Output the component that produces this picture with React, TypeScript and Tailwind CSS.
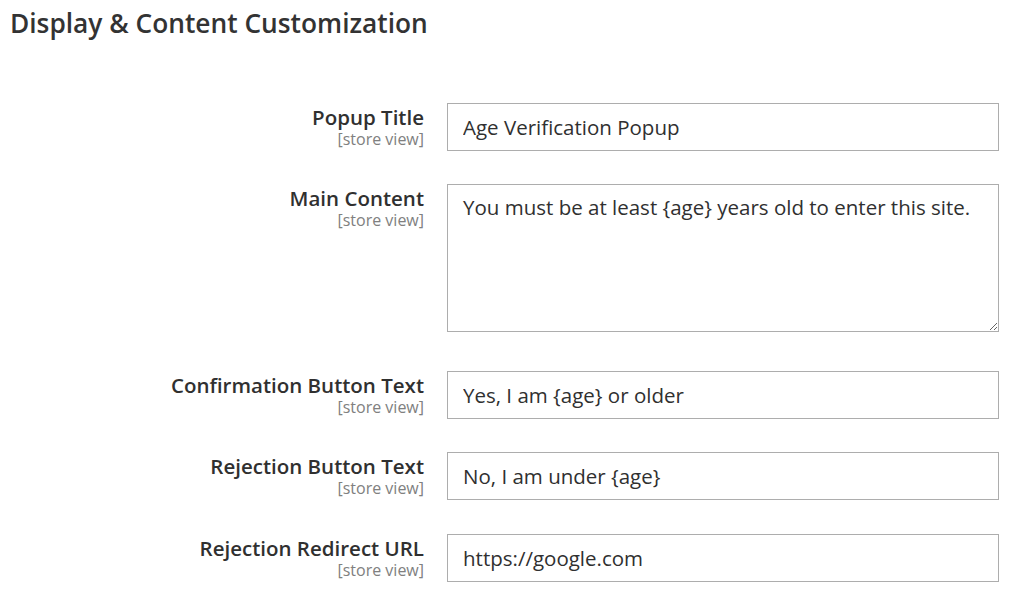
import React from 'react'

type Field = {
  label: string
  value: string
  multiline?: boolean
}

const fields: Field[] = [
  { label: 'Popup Title', value: 'Age Verification Popup' },
  {
    label: 'Main Content',
    value: 'You must be at least {age} years old to enter this site.',
    multiline: true,
  },
  { label: 'Confirmation Button Text', value: 'Yes, I am {age} or older' },
  { label: 'Rejection Button Text', value: 'No, I am under {age}' },
  { label: 'Rejection Redirect URL', value: 'https://google.com' },
]

const FieldRow = ({ field }: { field: Field }) => {
  return (
    <div className="flex items-start">
      <label className="w-[424px] shrink-0 pt-[2px] flex flex-col items-end text-right">
        <span className="font-semibold text-[20.5px] leading-[24px] text-[#303030]">
          {field.label}
        </span>
        <span className="mt-[1px] text-[16px] leading-[18px] text-[#808080]">
          [store view]
        </span>
      </label>
      <div className="ml-[23px] w-[552px]">
        {field.multiline ? (
          <textarea
            defaultValue={field.value}
            className="block w-full h-[148px] border border-[#adadad] px-[15px] py-[8px] text-[20.5px] leading-[28px] text-[#303030] outline-none resize-y"
          />
        ) : (
          <input
            defaultValue={field.value}
            className="block w-full h-[48px] border border-[#adadad] px-[15px] text-[20.5px] text-[#303030] outline-none"
          />
        )}
      </div>
    </div>
  )
}

export default function App() {
  return (
    <div
      className="w-[1024px] h-[594px] bg-white overflow-hidden"
      style={{ fontFamily: '"Open Sans", sans-serif' }}
    >
      <h2 className="pl-[10px] pt-[5px] font-semibold text-[26.3px] leading-[36px] text-[#333333]">
        Display &amp; Content Customization
      </h2>
      <div className="mt-[62px] flex flex-col">
        <FieldRow field={fields[0]} />
        <div className="mt-[33px]">
          <FieldRow field={fields[1]} />
        </div>
        <div className="mt-[39px]">
          <FieldRow field={fields[2]} />
        </div>
        <div className="mt-[33px]">
          <FieldRow field={fields[3]} />
        </div>
        <div className="mt-[34px]">
          <FieldRow field={fields[4]} />
        </div>
      </div>
    </div>
  )
}
